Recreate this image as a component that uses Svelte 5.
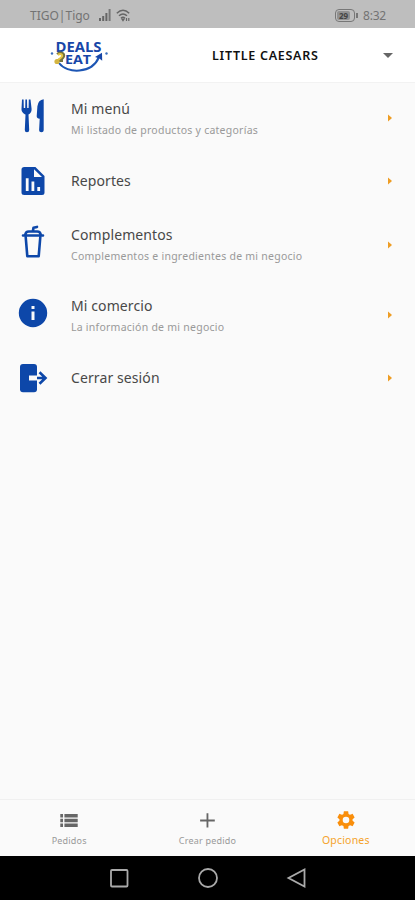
<script lang="ts">
interface Option {
  icon: 'menu' | 'report' | 'drink' | 'info' | 'logout'
  title: string
  summary?: string
}

const options: Option[] = [
  { icon: 'menu', title: 'Mi menú', summary: 'Mi listado de productos y categorías' },
  { icon: 'report', title: 'Reportes' },
  { icon: 'drink', title: 'Complementos', summary: 'Complementos e ingredientes de mi negocio' },
  { icon: 'info', title: 'Mi comercio', summary: 'La información de mi negocio' },
  { icon: 'logout', title: 'Cerrar sesión' },
]

const tabs = [
  { id: 'orders', label: 'Pedidos' },
  { id: 'create', label: 'Crear pedido' },
  { id: 'options', label: 'Opciones' },
]

let active = $state('options')
</script>

<div class="screen">
  <div class="status-bar">
    <span class="carrier">TIGO|Tigo</span>
    <svg class="signal" width="12" height="12" viewBox="0 0 12 12">
      <path d="M0 9h2v3H0zM3.2 7h2v5h-2zM6.4 4h2v8h-2z" fill="#666" />
      <path d="M9.6 0h2v12h-2z" fill="#777" />
    </svg>
    <svg class="wifi" width="15" height="13" viewBox="0 0 15 13" fill="none" stroke="#666" stroke-width="1.5">
      <path d="M.8 4.2Q7 -1.6 13.2 4.2M3 6.8Q7 3.2 11 6.8M5 9.2Q7 7.4 9 9.2" />
      <path d="M6 10.2h2L7 11.6zM10.5 9v3M12.8 9v3" stroke-width="1.2" />
    </svg>
    <span class="battery"><span class="charge">29</span></span>
    <span class="clock">8:32</span>
  </div>

  <header>
    <svg class="logo" width="60" height="36" viewBox="0 0 60 36">
      <g fill="#1746a8" font-family="Open Sans, sans-serif" font-weight="700">
        <text x="5.5" y="13.5" font-size="13.5" textLength="46" lengthAdjust="spacingAndGlyphs">DEALS</text>
        <text x="15" y="25.5" font-size="13" textLength="26" lengthAdjust="spacingAndGlyphs">EAT</text>
      </g>
      <path d="M9 25C17 36 42 36 49 19" fill="none" stroke="#1d56b4" stroke-width="2" />
      <path d="M45 19l7-4.2.2 8-2.8-2.3z" fill="#1746a8" />
      <circle cx="2" cy="15.5" r="1.2" fill="#3b70bd" />
      <circle cx="56.5" cy="15.5" r="1.2" fill="#3b70bd" />
      <path d="M7.5 16.5c2-3 7-1 6 2-.5 2-3 3-5 4h4.5" fill="none" stroke="#75733f" stroke-width="3" />
      <path d="M8 17c2-2 5-.5 4 1.5-1 1.6-3 2.5-5 4.3" fill="none" stroke="#e5c543" stroke-width="2" />
      <circle cx="7" cy="23.5" r="2.6" fill="#d4b541" />
    </svg>
    <span class="store">LITTLE CAESARS</span>
    <svg class="caret" width="10" height="5" viewBox="0 0 10 5"><path d="M0 0h10L5 5z" fill="#666" /></svg>
  </header>

  <main>
    {#each options as option}
      <div class="option" class:tall={option.summary}>
        <svg class="icon" width="30" height="36" viewBox="0 0 30 36" fill="#0d47a9">
          {#if option.icon === 'menu'}
            <path d="M4 1.5h1.6l.2 8.5h1.4l.2-8.5H9l.2 8.5h1.4l.2-8.5h1.7l1.1 9.5c.2 3-1.4 4.7-3.1 5.5l.7 15.6q.1 2.2-2.2 2.2t-2.2-2.2l.7-15.6c-1.8-.8-4.2-2.5-4-5.5z" />
            <path d="M25.7 1.3v31q0 2-2.3 2t-2.3-2l.6-11.5q-3-.5-3-2.5l.7-10q.8-6.5 6.3-7z" />
          {:else if option.icon === 'report'}
            <path fill-rule="evenodd" d="M6.2 4h11.2L26.5 13v16.5q0 2.5-2.5 2.5H6.2q-2.7 0-2.7-2.5v-23Q3.5 4 6.2 4zM16 6.3V14h8zM7.8 15.3V28h2.8V15.3zM13.5 18.5V28h2.8v-9.5zM19.3 24v4h2.8v-4z" />
          {:else if option.icon === 'drink'}
            <g fill="none" stroke="#0d47a9" stroke-linecap="round" stroke-linejoin="round" stroke-width="2.6">
              <path d="M5 10.5h20M7.2 9.7q.6-3.2 3.5-3.2h8.6q2.9 0 3.5 3.2M15 5.5l.5-2.7 3.5-.9" />
              <path d="M7.7 12l1.6 19.2h11.4L22.3 12" />
            </g>
          {:else if option.icon === 'info'}
            <path fill-rule="evenodd" d="M15 3.8a14.2 14.2 0 1 0 0 28.4a14.2 14.2 0 1 0 0-28.4zM13.5 11h3v3h-3zM13.5 16.5h3v8.5h-3z" />
          {:else}
            <path d="M5 4h11q3 0 3 3v22.2q0 3-3 3H5q-3 0-3-3V7q0-3 3-3z" />
            <path d="M11 18h17M21 11.7l6.5 6.3-6.5 6.3" fill="none" stroke="#fafafa" stroke-width="5" />
            <path d="M19 18h9M21.5 12.2l6 5.8-6 5.8" fill="none" stroke="#0d47a9" stroke-width="2.6" />
          {/if}
        </svg>
        <div class="text">
          <h3>{option.title}</h3>
          {#if option.summary}
            <p>{option.summary}</p>
          {/if}
        </div>
        <svg class="arrow" width="5" height="8" viewBox="0 0 5 8"><path d="M0 .5v7L4 4z" fill="#ee9d24" /></svg>
      </div>
    {/each}
  </main>

  <nav>
    {#each tabs as tab}
      <button class:active={active === tab.id} onclick={() => (active = tab.id)}>
        <svg width="24" height="24" viewBox="0 0 24 24">
          {#if tab.id === 'orders'}
            <path d="M2.5 5.5h3v3.7h-3zM7 5.5h14.5v3.7H7zM2.5 10.7h3v3.7h-3zM7 10.7h14.5v3.7H7zM2.5 15.9h3v3.7h-3zM7 15.9h14.5v3.7H7z" />
          {:else if tab.id === 'create'}
            <path d="M4.5 11.5h7V4.7h2v6.8h7v2h-7v6.8h-2v-6.8h-7z" />
          {:else}
            <path d="M19.14 12.94c.04-.3.06-.61.06-.94 0-.32-.02-.64-.07-.94l2.03-1.58c.18-.14.23-.41.12-.61l-1.92-3.32c-.12-.22-.37-.29-.59-.22l-2.39.96c-.5-.38-1.03-.7-1.62-.94l-.36-2.54c-.04-.24-.24-.41-.48-.41h-3.84c-.24 0-.43.17-.47.41l-.36 2.54c-.59.24-1.13.57-1.62.94l-2.39-.96c-.22-.08-.47 0-.59.22L2.74 8.87c-.12.21-.08.47.12.61l2.03 1.58c-.05.3-.09.63-.09.94s.02.64.07.94l-2.03 1.58c-.18.14-.23.41-.12.61l1.92 3.32c.12.22.37.29.59.22l2.39-.96c.5.38 1.03.7 1.62.94l.36 2.54c.05.24.24.41.48.41h3.84c.24 0 .44-.17.47-.41l.36-2.54c.59-.24 1.13-.56 1.62-.94l2.39.96c.22.08.47 0 .59-.22l1.92-3.32c.12-.22.07-.47-.12-.61l-2.01-1.58zM12 15.6a3.6 3.6 0 1 1 0-7.2a3.6 3.6 0 0 1 0 7.2z" />
          {/if}
        </svg>
        <span>{tab.label}</span>
      </button>
    {/each}
  </nav>

  <div class="system-bar">
    <svg width="22" height="22" viewBox="0 0 22 22"><rect x="3" y="3" width="16.5" height="16.5" rx="1" /></svg>
    <svg width="22" height="22" viewBox="0 0 22 22"><circle cx="11" cy="11" r="9" /></svg>
    <svg width="22" height="22" viewBox="0 0 22 22"><path d="M18.5 2.5v17L2.5 11z" /></svg>
  </div>
</div>

<style>
  :global(body) {
    margin: 0;
  }

  .screen {
    display: flex;
    flex-direction: column;
    width: 415px;
    height: 900px;
    background: #fafafa;
    font-family: 'Noto Sans', sans-serif;
    overflow: hidden;
  }

  .status-bar {
    display: flex;
    align-items: center;
    box-sizing: border-box;
    height: 28px;
    padding: 2px 29px 0 30px;
    background: #bebebe;
    color: #737373;
    font-size: 12px;

    .carrier {
      width: 69px;
    }

    .wifi {
      margin-left: 5px;
    }

    .battery {
      display: flex;
      position: relative;
      box-sizing: border-box;
      width: 20px;
      height: 13px;
      margin-left: auto;
      padding: 1px;
      border: 1px solid #777;
      border-radius: 4px;

      &::after {
        content: '';
        position: absolute;
        right: -4px;
        top: 3px;
        width: 2px;
        height: 5px;
        background: #777;
      }
    }

    .charge {
      width: 13px;
      border-radius: 2px;
      background: #919191;
      color: #444;
      font-size: 8px;
      font-weight: 700;
      line-height: 9px;
      text-align: center;
    }

    .clock {
      margin-left: 8px;
      letter-spacing: -0.2px;
    }
  }

  header {
    display: flex;
    align-items: center;
    box-sizing: border-box;
    height: 55px;
    padding: 1px 22px 0 50px;
    background: #fff;
    border-bottom: 1px solid #f2f2f2;

    .store {
      margin-left: 102px;
      color: #111;
      font-size: 12.5px;
      font-weight: 600;
      letter-spacing: 0.72px;
      white-space: nowrap;
    }

    .caret {
      margin-left: auto;
    }
  }

  main {
    flex: 1;
  }

  .option {
    display: flex;
    align-items: center;
    height: 55.8px;
    padding: 0 22px 0 18px;

    .icon {
      flex-shrink: 0;
    }

    .text {
      flex: 1;
      margin-left: 23px;
    }

    h3 {
      margin: 0;
      color: #484848;
      font-size: 14px;
      font-weight: 400;
      line-height: 20px;
      letter-spacing: 0.1px;
    }

    p {
      margin: 3px 0 0;
      color: #999;
      font-size: 10.5px;
      line-height: 16px;
      letter-spacing: 0.25px;
    }

    &.tall {
      height: 70.5px;

      .icon {
        margin-top: -4px;
      }
    }
  }

  nav {
    display: flex;
    box-sizing: border-box;
    height: 57px;
    border-top: 1px solid #f0f0f0;

    button {
      display: flex;
      flex: 1;
      flex-direction: column;
      align-items: center;
      padding: 9px 0 0;
      border: 0;
      background: none;
      color: #999;
      font-family: inherit;
      font-size: 9px;
      line-height: 14px;
      letter-spacing: 0.2px;
    }

    svg {
      width: 22px;
      height: 22px;
      fill: #666;
    }

    span {
      margin-top: 3px;
    }

    .active {
      color: #f5a32b;
      font-size: 10.5px;

      svg {
        fill: #f98e0b;
      }

      span {
        margin-top: 2px;
      }
    }
  }

  .system-bar {
    display: flex;
    align-items: center;
    justify-content: center;
    gap: 67px;
    height: 44px;
    background: #000;

    svg {
      fill: none;
      stroke: #aaa;
      stroke-width: 1.8;
    }
  }
</style>
